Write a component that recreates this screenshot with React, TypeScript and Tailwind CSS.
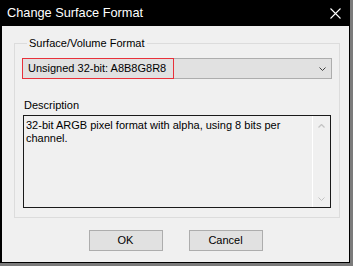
import React from 'react';

const font = { fontFamily: '"Liberation Sans", Arial, sans-serif' };

const ChevronDown = ({ color = '#404040' }: { color?: string }) => (
    <svg width="7" height="4" viewBox="0 0 7 4" className="block">
        <path d="M0.5 0.5 L3.5 3.5 L6.5 0.5" fill="none" stroke={color} strokeWidth="1" />
    </svg>
);

const ChevronUp = ({ color = '#c4c4c4' }: { color?: string }) => (
    <svg width="7" height="4" viewBox="0 0 7 4" className="block">
        <path d="M0.5 3.5 L3.5 0.5 L6.5 3.5" fill="none" stroke={color} strokeWidth="1.3" />
    </svg>
);

export default function App() {
    return (
        <div className="w-[353px] h-[266px] bg-[#7b7b7b] overflow-hidden" style={font}>
            <div className="w-[350px] h-[263px] flex flex-col bg-[#f0f0f0] border border-black border-l-2">
                {/* title bar */}
                <div className="h-[25px] bg-black flex items-center justify-between pl-[5px] pr-[8px] shrink-0">
                    <span className="text-white text-[12.75px] leading-none">Change Surface Format</span>
                    <svg width="11" height="11" viewBox="0 0 11 11">
                        <path d="M0.5 0.5 L10.5 10.5 M10.5 0.5 L0.5 10.5" stroke="#fff" strokeWidth="1.1" />
                    </svg>
                </div>

                <div className="flex flex-col flex-1 text-[11px] text-black leading-[13px]">
                    <fieldset className="mt-[11px] ml-[12px] mr-[9px] border border-[#dcdcdc] px-[7px] pb-[9px] pt-[8px]">
                        <legend className="ml-[5px] px-[2px]">Surface/Volume Format</legend>

                        <div className="relative h-[21px] flex items-center justify-between bg-[#e1e1e1] border border-[#adadad] pl-[5px] pr-[5px]">
                            <span>Unsigned 32-bit: A8B8G8R8</span>
                            <ChevronDown />
                            <div className="absolute -left-px -top-px -bottom-px w-[152px] border border-[#e8313a]" />
                        </div>

                        <div className="mt-[20px] ml-[2px]">Description</div>

                        <div className="mt-[3px] ml-[1px] mr-px h-[93px] border border-[#1a1a1a] flex">
                            <div className="flex-1 pl-[2px] pt-[3px]">
                                32-bit ARGB pixel format with alpha, using 8 bits per channel.
                            </div>
                            <div className="w-[18px] border-l border-white flex flex-col items-center justify-between pt-[8px] pb-[6px]">
                                <ChevronUp />
                                <ChevronDown color="#c4c4c4" />
                            </div>
                        </div>
                    </fieldset>

                    <div className="flex justify-center gap-[26px] mt-[12px]">
                        <button className="w-[74px] h-[21px] bg-[#e1e1e1] border border-[#adadad] text-[11px]">OK</button>
                        <button className="w-[74px] h-[21px] bg-[#e1e1e1] border border-[#adadad] text-[11px]">Cancel</button>
                    </div>
                </div>
            </div>
        </div>
    );
}
